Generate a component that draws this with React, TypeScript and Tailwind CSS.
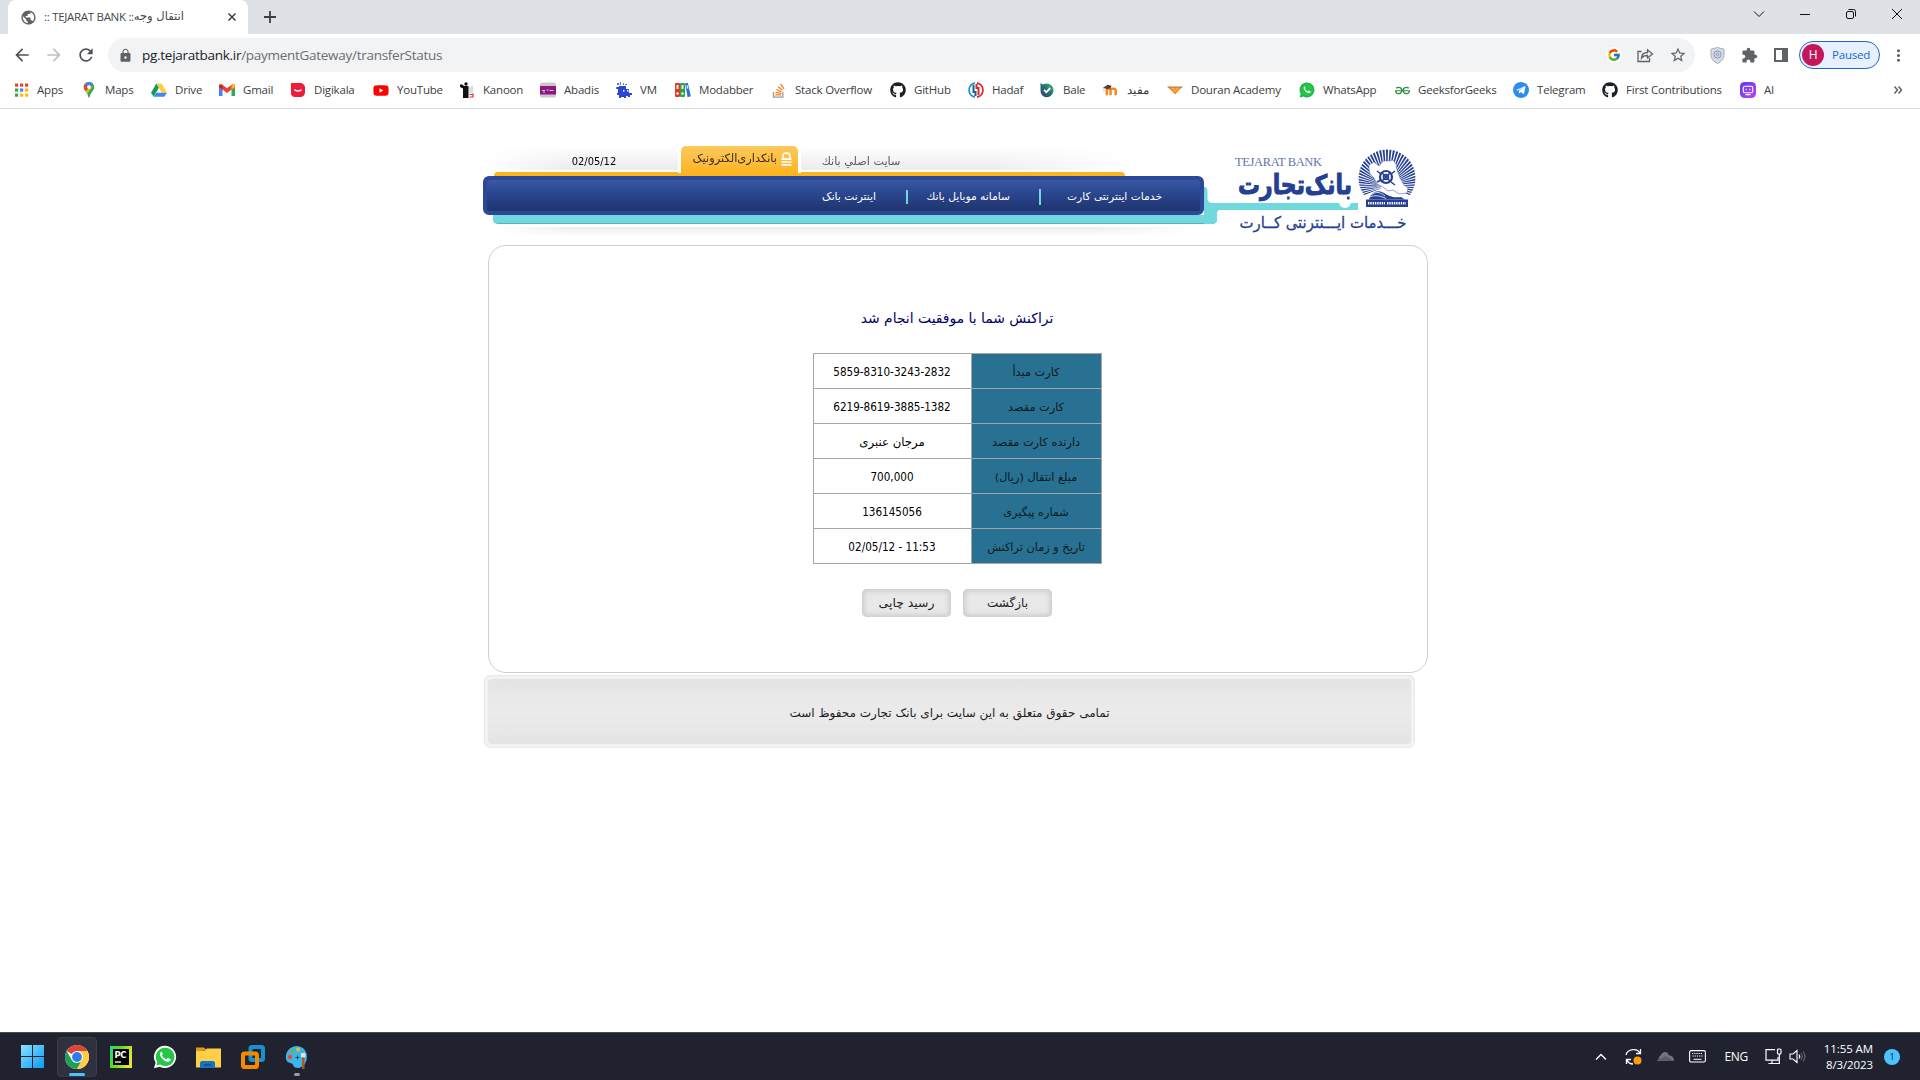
import React from "react";
import { FaGithub, FaYoutube } from "react-icons/fa";
import { FcGoogle } from "react-icons/fc";
import { SiGeeksforgeeks } from "react-icons/si";
import { MdLock, MdExtension, MdStarBorder, MdMoreVert, MdArrowBack, MdArrowForward, MdRefresh, MdPublic } from "react-icons/md";

const AppsIcon = () => (
  <svg width="16" height="16" viewBox="0 0 16 16">
    {["#ea4335", "#ea4335", "#ea4335", "#34a853", "#4285f4", "#fbbc04", "#34a853", "#fbbc04", "#fbbc04"].map((c, i) => (
      <rect key={i} x={2 + (i % 3) * 5} y={1.5 + Math.floor(i / 3) * 5} width="3.2" height="3.2" fill={c} />
    ))}
  </svg>
);
const MapsIcon = () => (
  <svg width="16" height="16" viewBox="0 0 16 16">
    <path d="M8 0C5 0 2.8 2.3 2.8 5.1c0 3.600 3.700 5.400 4.600 10.200.1.6 1.1.6 1.200 0C9.500 10.500 13.200 8.700 13.200 5.100 13.200 2.300 11 0 8 0z" fill="#34a853" />
    <path d="M8 0C5 0 2.800 2.300 2.800 5.100l1.400 3.600L12 1.700A5.200 5.200 0 0 0 8 0z" fill="#4285f4" />
    <path d="M2.800 5.100c0-1.400.5-2.500 1.300-3.400l3.900 3.400-3.500 4C3.600 8 2.800 6.700 2.800 5.100z" fill="#ea4335" />
    <path d="M8 7 4.300 8.900l1.900 2.800L12.600 3z" fill="#fbbc04" />
    <circle cx="8" cy="5.100" r="1.900" fill="#fff" />
  </svg>
);
const DriveIcon = () => (
  <svg width="16" height="16" viewBox="0 0 16 16">
    <path d="M5.400 1.500 0 10.800l2.700 4L8 5.600z" fill="#0f9d58" />
    <path d="M5.400 1.500h5.200l5.400 9.300h-5.300z" fill="#ffcd40" />
    <path d="M5.300 10.800H16l-2.700 4H2.700z" fill="#4285f4" />
  </svg>
);
const GmailIcon = () => (
  <svg width="16" height="16" viewBox="0 0 16 16">
    <path d="M0 3.500V14h3.500V7z" fill="#4285f4" />
    <path d="M16 3.500V14h-3.500V7z" fill="#34a853" />
    <path d="M0 3.500C0 2 1.700 1.500 2.800 2.300L8 6.300l5.200-4C14.300 1.500 16 2 16 3.500V5l-8 6-8-6z" fill="#ea4335" />
    <path d="M12.500 2.900C14 1.500 16 2 16 3.800V5l-3.500 2.600z" fill="#fbbc04" />
    <path d="M0 3.800V5l3.500 2.600V2.900z" fill="#c5221f" />
  </svg>
);
const DigikalaIcon = () => (
  <svg width="16" height="16" viewBox="0 0 16 16">
    <path d="M1 1h9c3 0 5 2 5 5v4c0 3-2 5-5 5H5c-2.500 0-4-1.500-4-4z" fill="#ee1b3b" />
    <path d="M4.500 7.500c1.500 2 5.500 2 7 0" stroke="#fff" strokeWidth="1.600" fill="none" />
  </svg>
);
const KanoonIcon = () => (
  <svg width="16" height="16" viewBox="0 0 16 16">
    <circle cx="7" cy="2" r="1.700" fill="#111" />
    <path d="M1 2.500h2.500l1.500 1.500h4.500V16H4V6.500L1 5z" fill="#111" />
    <path d="M11 5v6M13 4v7" stroke="#bbb" strokeWidth="1" />
    <path d="M10.500 12.500h4M10.500 15h4M14 11.500v4" stroke="#d33" strokeWidth="1.200" />
  </svg>
);
const AbadisIcon = () => (
  <svg width="16" height="16" viewBox="0 0 16 16">
    <rect y="0.500" width="16" height="15" rx="2" fill="#c9c9c9" />
    <rect y="4" width="16" height="8.500" fill="#8d1683" />
    <path d="M2 8.500h3M6.500 8h2M9.500 8.500h4M3 10h2" stroke="#e7bfe4" strokeWidth="1" />
  </svg>
);
const VmIcon = () => (
  <svg width="16" height="16" viewBox="0 0 16 16">
    <path d="M3 4h7v3h3v4h3v2h-2v2h-2v-1h-2v2H8v-1H5v1H3v-3H1v-2h1V7H1V5h2z" fill="#2948cf" />
    <path d="M1 1h2v2H1zM4 0h1v3H4zM7 1h1v2H7zM9 2h2v1H9zM0 5h1v2H0z" fill="#5f78e2" />
    <path d="M7 8h1.500v1.500H7zM11 8h1.500v1.500H11z" fill="#fff" />
  </svg>
);
const ModabberIcon = () => (
  <svg width="16" height="16" viewBox="0 0 16 16">
    <rect x="0" y="1" width="5" height="14" rx="1" fill="#e3342b" />
    <rect x="5" y="1" width="5" height="14" rx="1" fill="#2aa53b" />
    <path d="m10 1.500 2.800-.8 3 13.500-3.200 1z" fill="#2d6fd6" />
    <path d="M1.500 3h2v4h-2zM6.500 3h2v4h-2z" fill="#eef" />
    <circle cx="2.500" cy="11.500" r="1.200" fill="#fff" />
    <circle cx="7.500" cy="11.500" r="1.200" fill="#fff" />
    <path d="m11.300 3.500 1.300-.3.800 3.300-1.300.3z" fill="#eef" />
  </svg>
);
const StackIcon = () => (
  <svg width="16" height="16" viewBox="0 0 16 16">
    <path d="M2.500 10v5.200h9.300V10" stroke="#999" strokeWidth="1.300" fill="none" />
    <path d="M4.300 12.800h5.800M4.500 10.300l5.700 1M5.300 7.500l5.300 2.300M7 4.600l4.500 3.700M9.600 2l3.400 4.800" stroke="#f48024" strokeWidth="1.300" />
  </svg>
);
const HadafIcon = () => (
  <svg width="16" height="16" viewBox="0 0 16 16">
    <path d="M7 1a7.100 7.100 0 0 0 0 14" stroke="#1496d4" strokeWidth="1.800" fill="none" />
    <path d="M9 1a7.100 7.100 0 0 1 0 14" stroke="#d8272d" strokeWidth="1.800" fill="none" />
    <path d="M5.500 3v7h2v4" stroke="#1c5f94" strokeWidth="2" fill="none" />
    <path d="M10.500 13V6h-2V2" stroke="#d8272d" strokeWidth="2" fill="none" />
  </svg>
);
const BaleIcon = () => (
  <svg width="16" height="16" viewBox="0 0 16 16">
    <defs>
      <linearGradient id="bale" x1="0" y1="1" x2="1" y2="0">
        <stop offset="0" stopColor="#2b3f86" />
        <stop offset="0.500" stopColor="#24706f" />
        <stop offset="1" stopColor="#3fc77b" />
      </linearGradient>
    </defs>
    <path d="M1.500 1 4 2.400C9 0 14.500 3.200 14.500 8.300c0 4-3.300 6.900-6.800 6.900-3.700 0-6.200-3.200-6.200-7z" fill="url(#bale)" />
    <path d="m5 7.800 2.300 2.300L11.300 6" stroke="#fff" strokeWidth="1.800" fill="none" />
  </svg>
);
const MoodleIcon = () => (
  <svg width="17" height="16" viewBox="0 0 17 16">
    <path d="M4 13.500V8.500c0-2.600 4-2.600 4 0v5M8 8.500c0-2.600 5.500-2.600 5.500 0v5" stroke="#f98012" strokeWidth="2.500" fill="none" />
    <path d="M0 5.500 5 2.500l4 1-1 2.800-4 .6z" fill="#444" />
    <path d="M1 5.500v4" stroke="#999" strokeWidth="0.700" />
  </svg>
);
const DouranIcon = () => (
  <svg width="18" height="16" viewBox="0 0 18 16">
    <path d="M0 4h18l-2.500 2.500h-13z" fill="#c97f34" />
    <path d="M3 6.500h12L9 13z" fill="#fb8a14" />
    <path d="m6 5 3 5 3-5" stroke="#ffc069" fill="none" />
  </svg>
);
const WhatsIcon = ({ size = 16 }: { size?: number }) => (
  <svg width={size} height={size} viewBox="0 0 24 24">
    <path d="M12 .8A11 11 0 0 0 2.600 17.600L1 23.200l5.800-1.500A11.100 11.100 0 1 0 12 .8z" fill={size > 16 ? "#fff" : "#12b944"} />
    <path d="M12 2.700a9.200 9.200 0 0 0-7.700 14.200l-1 3.700 3.900-1A9.200 9.200 0 1 0 12 2.700z" fill="#25c548" />
    <path d="M8.300 6.700c-.7.300-1.700 1.500-1.200 3.200.8 3 4.200 6.300 7.200 6.900 1.500.3 3-.7 3.200-1.700.2-.7 0-.9-.3-1l-2.300-1.100c-.4-.2-.7 0-1.300 1-.2.3-.5.200-1 0-1.600-.7-3-2-3.700-3.400-.1-.4 1-1 .9-1.700L9 7.200c-.2-.5-.4-.6-.7-.5z" fill="#fff" />
  </svg>
);
const TelegramIcon = () => (
  <svg width="16" height="16" viewBox="0 0 16 16">
    <circle cx="8" cy="8" r="8" fill="#2f8fe8" />
    <path d="m3 8 9.500-4-1.600 8.300-3.200-2.300-1.600 1.500-.3-2.500 4.500-3.700-5.300 3.300z" fill="#fff" />
  </svg>
);
const AiIcon = () => (
  <svg width="16" height="16" viewBox="0 0 16 16">
    <defs>
      <linearGradient id="ai" x1="0" y1="0" x2="1" y2="1">
        <stop offset="0" stopColor="#5a3df0" />
        <stop offset="1" stopColor="#c63df2" />
      </linearGradient>
    </defs>
    <rect width="16" height="16" rx="4.500" fill="url(#ai)" />
    <rect x="3.300" y="4.300" width="9.400" height="6.500" rx="1.700" fill="none" stroke="#fff" strokeWidth="1.100" />
    <path d="M6.200 6.700v1.500M9.800 6.700v1.500M5.500 12.600h5" stroke="#fff" strokeWidth="1.100" />
  </svg>
);

const bookmarks: { label: string; w: string; icon: React.ReactNode }[] = [
  { label: "Apps", w: "w-[68px]", icon: <AppsIcon /> },
  { label: "Maps", w: "w-[70px]", icon: <MapsIcon /> },
  { label: "Drive", w: "w-[68px]", icon: <DriveIcon /> },
  { label: "Gmail", w: "w-[71px]", icon: <GmailIcon /> },
  { label: "Digikala", w: "w-[83px]", icon: <DigikalaIcon /> },
  { label: "YouTube", w: "w-[86px]", icon: <FaYoutube size={17} color="#f00" /> },
  { label: "Kanoon", w: "w-[81px]", icon: <KanoonIcon /> },
  { label: "Abadis", w: "w-[76px]", icon: <AbadisIcon /> },
  { label: "VM", w: "w-[59px]", icon: <VmIcon /> },
  { label: "Modabber", w: "w-[96px]", icon: <ModabberIcon /> },
  { label: "Stack Overflow", w: "w-[119px]", icon: <StackIcon /> },
  { label: "GitHub", w: "w-[78px]", icon: <FaGithub size={16} color="#1b1f23" /> },
  { label: "Hadaf", w: "w-[71px]", icon: <HadafIcon /> },
  { label: "Bale", w: "w-[64px]", icon: <BaleIcon /> },
  { label: "مفید", w: "w-[64px]", icon: <MoodleIcon /> },
  { label: "Douran Academy", w: "w-[132px]", icon: <DouranIcon /> },
  { label: "WhatsApp", w: "w-[95px]", icon: <WhatsIcon /> },
  { label: "GeeksforGeeks", w: "w-[119px]", icon: <SiGeeksforgeeks size={15} color="#2f8d46" /> },
  { label: "Telegram", w: "w-[89px]", icon: <TelegramIcon /> },
  { label: "First Contributions", w: "w-[138px]", icon: <FaGithub size={16} color="#1b1f23" /> },
  { label: "AI", w: "w-[50px]", icon: <AiIcon /> },
];

function Browser() {
  return (
    <div className="font-['Open_Sans',sans-serif]">
      <div className="flex h-[34px] bg-[#dee1e6] pl-2">
        <div className="flex h-[34px] w-[240px] items-center rounded-t-lg bg-white pl-3 pr-[8px] text-[#45484c]">
          <MdPublic size={17} color="#5f6368" />
          <span className="ml-[7px] flex flex-1 items-center whitespace-pre text-[11.5px] tracking-[-0.3px]">
            <span>:: TEJARAT BANK ::</span>
            <span className="font-['DejaVu_Sans',sans-serif] text-[11.5px] tracking-normal">انتقال وجه</span>
          </span>
          <svg width="16" height="16" viewBox="0 0 16 16" stroke="#3c4043" strokeWidth="1.500"><path d="m4.500 4.500 7 7M11.500 4.500l-7 7" /></svg>
        </div>
        <svg className="ml-[14px] mt-[9px]" width="16" height="16" viewBox="0 0 16 16" stroke="#3c4043" strokeWidth="1.800"><path d="M8 2v12M2 8h12" /></svg>
        <div className="ml-auto flex h-7 items-center gap-[30px] pr-[15px]">
          <svg width="16" height="16" viewBox="0 0 16 16" stroke="#111" fill="none"><path d="m3 5.500 5 5 5-5" /></svg>
          <svg width="16" height="16" viewBox="0 0 16 16" stroke="#111" fill="none"><path d="M3 8.500h10" /></svg>
          <svg width="16" height="16" viewBox="0 0 16 16" stroke="#111" fill="none"><rect x="3.500" y="5.500" width="7" height="7" rx="1.500" /><path d="M5.500 3.500h5a2 2 0 0 1 2 2v5" /></svg>
          <svg width="16" height="16" viewBox="0 0 16 16" stroke="#111" fill="none"><path d="m3 3 10 10M13 3 3 13" /></svg>
        </div>
      </div>
      <div className="flex h-[42px] items-center bg-white pl-[12px] pr-[11px]">
        <MdArrowBack size={20} color="#4f5357" />
        <MdArrowForward className="ml-[12px]" size={20} color="#bdc1c6" />
        <MdRefresh className="ml-[12px]" size={20} color="#4f5357" />
        <div className="ml-[12px] flex h-[34px] w-[1587px] items-center rounded-full bg-[#f1f3f4] pl-[10px] pr-[8px]">
          <MdLock size={15} color="#5f6368" />
          <span className="ml-[9px] text-[13.5px] tracking-[-0.28px] text-[#6a6e73]"><span className="text-[#202124]">pg.tejaratbank.ir</span>/paymentGateway/transferStatus</span>
          <div className="ml-auto flex items-center gap-[15px]">
            <span className="flex size-4 items-center justify-center rounded-full bg-white"><FcGoogle size={14} /></span>
            <svg width="17" height="18" viewBox="0 0 17 18" fill="none" stroke="#5f6368" strokeWidth="1.300"><path d="M4.500 5.500H1v10h11.500V12" /><path d="M4.500 12c.3-4 3-5.500 6-5.500V3.800L15.500 8l-5 4V9.500c-3 0-4.500.5-6 2.500z" /></svg>
            <MdStarBorder size={18} color="#5f6368" />
          </div>
        </div>
        <svg className="ml-[15px]" width="15" height="17" viewBox="0 0 15 17"><path d="M7.500.5 14 2.200v6c0 4-3 6.600-6.500 8.200C4 14.800 1 12.200 1 8.200v-6z" fill="#d5dbe6" stroke="#a3adbd" /><circle cx="7.500" cy="7.500" r="3.600" fill="none" stroke="#8b98ae" /><circle cx="7.500" cy="7.500" r="1.400" fill="none" stroke="#8b98ae" /></svg>
        <MdExtension className="ml-[16px]" size={17} color="#5f6368" />
        <svg className="ml-[15px]" width="16" height="16" viewBox="0 0 16 16"><path d="M1 1h14v14H1zm2 2v10h6V3z" fill="#5f6368" fillRule="evenodd" /></svg>
        <div className="ml-[10px] flex h-7 w-[81px] items-center rounded-full border border-[#1967d2] bg-[#e8f0fe] pl-[2px] text-[11.5px] tracking-[-0.2px] text-[#1967d2]">
          <span className="flex size-[22px] items-center justify-center rounded-full bg-[#c2185b] text-[12px] text-white">H</span>
          <span className="ml-[8px]">Paused</span>
        </div>
        <MdMoreVert className="ml-[9px]" size={19} color="#5f6368" />
      </div>
      <div className="flex h-[33px] items-center border-b border-[#d9dadc] bg-white pb-[4px] pl-[13px] pr-[17px] text-[11.5px] tracking-[-0.2px] text-[#3c4043]">
        {bookmarks.map((b, i) => (
          <div key={i} className={b.w + " flex shrink-0 items-center whitespace-nowrap"}>
            <span className="flex w-4 shrink-0 justify-center">{b.icon}</span>
            <span className="ml-2">{b.label}</span>
          </div>
        ))}
        <svg className="ml-auto" width="10" height="10" viewBox="0 0 10 10" stroke="#5f6368" strokeWidth="1.500" fill="none"><path d="m1.500 1.500 3 3.500-3 3.500M5.500 1.500l3 3.500-3 3.500" /></svg>
      </div>
    </div>
  );
}

function Emblem() {
  const rays = Array.from({ length: 41 }, (_, i) => {
    const a = ((-200 + i * 5.5) * Math.PI) / 180;
    const p = (r: number, d: number) => `${(29 + Math.cos(a + d) * r).toFixed(2)} ${(37 + Math.sin(a + d) * r).toFixed(2)}`;
    return `M${p(6, -0.02)}L${p(50, -0.029)}L${p(50, 0.029)}L${p(6, 0.02)}z`;
  }).join("");
  return (
    <g transform="translate(154 5)">
      <clipPath id="disc"><circle cx="29" cy="29" r="28.500" /></clipPath>
      <path d={rays} fill="#253f93" clipPath="url(#disc)" />
      <path d="M11 50.500c2-7 8-10 14-7 5 2.500 9 6 18 4.500l4 2.500z" fill="#253f93" />
      <path d="M11 16l5-3 5 4 4-5h6l4-1 3 4 1 6 3 8 4 7 4 3-1 5-8 1-6-4-5 1-5-4-6-3-3-6-4-4-1-5z" fill="#fff" stroke="#6c7db5" strokeWidth="0.700" />
      <g stroke="#253f93" fill="none">
        <circle cx="28" cy="28" r="6" strokeWidth="2.200" />
        <circle cx="28" cy="28" r="2.400" strokeWidth="1.800" />
        <path d="m24 24 8 8m0-8-8 8M19 22l4 3M33 33l4 3M37 22l-4 3M19 33l4-2" strokeWidth="1.500" />
      </g>
      <path d="M13 46c5-4 9-3 14 1M10 49c6-4 13-2 18 .5" stroke="#fff" strokeWidth="0.800" fill="none" />
      <rect x="8" y="50.500" width="42" height="7.500" fill="#253f93" />
      <path d="M10 54.300h17M29 54.300h19" stroke="#fff" strokeWidth="2.600" strokeDasharray="1.400 0.900" />
    </g>
  );
}

function Header() {
  return (
    <header className="flex h-[100px] w-[940px]">
      <div className="w-[721px]">
        <div className="flex h-[27px] border-b-2 border-white bg-gradient-to-b from-white to-[#ececec] [mask-image:linear-gradient(to_right,transparent,black_12%,black_70%,transparent_90%)] [mask-clip:no-clip]">
          <div className="w-[222px] pt-[9px] text-center font-['DejaVu_Sans_Condensed','DejaVu_Sans',sans-serif] text-[11px] leading-4 text-black">02/05/12</div>
          <div className="relative top-[-2px] ml-[-27px] flex h-[30px] w-[123px] items-center justify-end gap-[4px] rounded-t-[8px] border-[3px] border-b-0 border-white bg-gradient-to-b from-[#fdc95b] to-[#fdb41d] pb-[2px] pr-[6px] text-[#3b2a20]">
            <span dir="rtl" className="whitespace-nowrap font-['DejaVu_Sans',sans-serif] text-[11.400px]">بانکداری‌الکترونیک</span>
            <svg width="11" height="14" viewBox="0 0 11 14" stroke="#fff" fill="none"><path d="M2 6V4a3.500 3 0 0 1 7 0v2" strokeWidth="1.600" /><path d="M.5 7.200h10M.5 10h10M.5 12.800h10" strokeWidth="1.700" /></svg>
          </div>
          <div dir="rtl" className="w-[120px] pt-[9px] text-center font-['DejaVu_Sans',sans-serif] text-[11.200px] leading-4 text-[#5b5b5b]">سایت اصلي بانك</div>
        </div>
        <div className="ml-[11px] h-[4px] w-[631px] rounded-t-[4px] bg-[#fdb41d]" />
        <nav dir="rtl" className="relative z-10 flex h-[39px] w-[721px] items-center rounded-[6px] border-4 border-[#2c4896] bg-gradient-to-b from-[#3b57a6] via-[#29448c] to-[#20356f] pr-[38px] pt-[3px] font-['DejaVu_Sans',sans-serif] text-[10.700px] text-white">
          <span className="w-[95px] whitespace-nowrap">خدمات اینترنتی كارت</span>
          <span className="mr-[26px] h-[16px] w-[2px] bg-[#6fd9de]" />
          <span className="mr-[29px] w-[84px] whitespace-nowrap">سامانه موبایل بانك</span>
          <span className="mr-[18px] h-[14px] w-[2px] bg-[#6fd9de]" />
          <span className="mr-[30px] w-[55px] whitespace-nowrap">اینترنت بانک</span>
        </nav>
        <div className="ml-[10px] h-[9px] w-[724px] rounded-b-[5px] border-b border-[#4fb9bf] bg-[#6fd9de]" />
        <div className="ml-[15px] mt-[3px] h-[9px] w-[700px] bg-gradient-to-b from-[#ebebeb] to-white [mask-image:linear-gradient(to_right,transparent,black_10%,black_85%,transparent)]" />
      </div>
      <svg className="mt-[-1px]" width="219" height="100" viewBox="0 0 219 100">
        <path d="M0 43c3 0 3.500 2 3.500 5v6c0 4 2 5 6 5H154v7H17c-4 0-4 2-4 5v4c0 4-2 5-5 5H0z" fill="#6fd9de" />
        <text x="31" y="22" fontFamily="Liberation Serif" fontSize="12.500" textLength="87" fill="#6474ac">TEJARAT BANK</text>
        <circle cx="141" cy="58" r="6" fill="#fff" />
        <text x="91" y="50" textAnchor="middle" direction="rtl" fontFamily="DejaVu Sans" fontWeight="bold" fontSize="27" textLength="114" lengthAdjust="spacingAndGlyphs" fill="#253f93" stroke="#253f93" strokeWidth="1">بانک‌تجارت</text>
        <text x="119" y="83.500" textAnchor="middle" direction="rtl" fontFamily="DejaVu Sans" fontSize="16" textLength="167" lengthAdjust="spacingAndGlyphs" fill="#253f93" stroke="#253f93" strokeWidth="0.300">خـــدمات ایـــنترنتی کــارت</text>
        <Emblem />
      </svg>
    </header>
  );
}

const rows = [
  ["کارت مبدأ", "5859-8310-3243-2832"],
  ["کارت مقصد", "6219-8619-3885-1382"],
  ["دارنده کارت مقصد", "مرجان عنبری"],
  ["مبلغ انتقال (ریال)", "700,000"],
  ["شماره پیگیری", "136145056"],
  ["تاریخ و زمان تراکنش", "02/05/12 - 11:53"],
];

function Page() {
  return (
    <main className="h-[923px] bg-white pl-[483px] pt-[36px] font-['DejaVu_Sans',sans-serif]">
      <Header />
      <section className="ml-[5px] flex h-[428px] w-[940px] flex-col items-center rounded-[18px] border border-[#cfcfcf] pr-[2px]">
        <h1 dir="rtl" className="mt-[62px] text-[13.900px] leading-5 text-[#000066]">تراکنش شما با موفقیت انجام شد</h1>
        <div dir="rtl" className="mt-[25px] w-[289px] border-x border-t border-[#a6a6a6]">
          {rows.map(([k, v], i) => (
            <div key={k} className="flex h-[35px] border-b border-[#a6a6a6]">
              <div className="flex w-[130px] items-center justify-center border-l border-[#a6a6a6] bg-[#287192] pt-[4px] text-[11.300px] text-[#0c1a22]">{k}</div>
              {i === 2 ? (
                <div className="flex flex-1 items-center justify-center pt-[4px] text-[11.700px] text-black">{v}</div>
              ) : (
                <div className="flex flex-1 items-center justify-center pt-[4px] font-['DejaVu_Sans_Condensed','DejaVu_Sans',sans-serif] text-[11.600px] text-black"><bdi dir="ltr">{v}</bdi></div>
              )}
            </div>
          ))}
        </div>
        <div dir="rtl" className="mt-[25px] flex gap-3">
          <button className="h-7 w-[89px] rounded-[5px] bg-[#e8e8e8] text-[12px] text-[#222] shadow-[inset_0_0_5px_2px_#cacaca]">بازگشت</button>
          <button className="h-7 w-[89px] rounded-[5px] bg-[#e8e8e8] text-[12.400px] text-[#222] shadow-[inset_0_0_5px_2px_#cacaca]">رسید چاپی</button>
        </div>
      </section>
      <footer className="ml-[1px] mt-[2px] h-[73px] w-[931px] rounded-[6px] border border-[#e9e9e9] bg-[#f2f2f2] p-[3px]">
        <div dir="rtl" className="flex h-full items-center justify-center rounded-[4px] bg-gradient-to-b from-[#e4e4e4] via-[#ebebeb] to-[#e4e4e4] pt-[3px] text-[12px] text-[#1c1c1c]">تمامی حقوق متعلق به این سایت برای بانک تجارت محفوظ است</div>
      </footer>
    </main>
  );
}

function Taskbar() {
  return (
    <div className="flex h-[48px] items-center border-t border-[#474854] bg-[#20222f] pl-[21px] pr-[20px] font-['Open_Sans',sans-serif] text-white">
      <svg width="23" height="23" viewBox="0 0 23 23">
        <defs><linearGradient id="win" x1="0" y1="0" x2="1" y2="1"><stop offset="0" stopColor="#8fe0ff" /><stop offset="1" stopColor="#0a9bf5" /></linearGradient></defs>
        <path d="M0 0h11v11H0zM12 0h11v11H12zM0 12h11v11H0zM12 12h11v11H12z" fill="url(#win)" />
      </svg>
      <div className="ml-[13px] flex h-10 w-10 flex-col items-center rounded-[4px] border border-[#393b47] bg-[#2f313e] pt-[7px]">
        <svg width="24" height="24" viewBox="0 0 24 24">
          <circle cx="12" cy="12" r="12" fill="#fff" />
          <path d="M12 12 1.600 6A12 12 0 0 1 22.400 6H12z" fill="#dc4437" />
          <path d="M1.600 6A12 12 0 0 0 12 24l5.200-9L12 12 6.800 15z" fill="#1fa055" />
          <path d="M22.400 6A12 12 0 0 1 12 24l5.200-9L12 6z" fill="#ffcd40" />
          <circle cx="12" cy="12" r="6" fill="#fff" /><circle cx="12" cy="12" r="4.900" fill="#2f7de9" />
        </svg>
        <span className="mt-[4px] h-[3px] w-4 shrink-0 rounded-full bg-[#4cc2ff]" />
      </div>
      <svg className="ml-[13px]" width="22" height="22" viewBox="0 0 22 22">
        <defs><linearGradient id="pc" x1="0" y1="0" x2="1" y2="0.400"><stop offset="0" stopColor="#21d789" /><stop offset="0.400" stopColor="#57d920" /><stop offset="1" stopColor="#e5e82a" /></linearGradient></defs>
        <rect width="22" height="22" fill="url(#pc)" /><rect x="3" y="3" width="16" height="16" fill="#000" />
        <text x="4.500" y="11.500" fontFamily="DejaVu Sans" fontWeight="bold" fontSize="8.500" fill="#fff" textLength="12">PC</text><path d="M5 16h6" stroke="#fff" strokeWidth="1.300" />
      </svg>
      <div className="ml-[21px]"><WhatsIcon size={24} /></div>
      <svg className="ml-[19px]" width="25" height="22" viewBox="0 0 25 22">
        <path d="M0 1.500h8l3 3H8L0 7z" fill="#e09a1b" /><path d="M0 5h8l3-2.500h14V21.500H0z" fill="#ffcf48" />
        <path d="M4 22v-5c0-1 1-2 2-2h11c1 0 2 1 2 2v5z" fill="#1273c8" /><path d="M8 19h7" stroke="#094b8c" strokeWidth="1.500" />
      </svg>
      <svg className="ml-[20px]" width="24" height="24" viewBox="0 0 24 24" fill="none" strokeWidth="4">
        <rect x="9.500" y="2" width="12.500" height="13" rx="1.500" stroke="#1492d3" /><path d="M8 8.500H3.500A1.500 1.500 0 0 0 2 10v10.500A1.500 1.500 0 0 0 3.500 22h11a1.500 1.500 0 0 0 1.500-1.500V10.500A2 2 0 0 0 14 8.500H8" stroke="#f38b00" />
      </svg>
      <div className="ml-[20px] flex flex-col items-center pt-[7px]">
        <svg width="24" height="24" viewBox="0 0 24 24">
          <path d="M12 1C5 1 0 7 1 14c1 5 6 3 7 6s6 5 11 0c5-6 4-18-7-19z" fill="#3fb4ea" />
          <circle cx="5" cy="12" r="2.200" fill="#e8492b" /><circle cx="7.500" cy="6.500" r="2" fill="#6ab82d" /><circle cx="13" cy="4.500" r="2" fill="#f3b72a" />
          <path d="M12.500 10.500v4M10.500 12.500h4" stroke="#1d4b7a" /><rect x="16" y="8" width="4.500" height="4.500" rx="1" fill="#eee0c5" /><path d="M17 12.500h2.500V24H17z" fill="#a75c1c" />
        </svg>
        <span className="mt-[4px] h-[3px] w-[6px] rounded-full bg-[#9a9ba3]" />
      </div>
      <div className="ml-auto flex items-center">
        <svg width="12" height="8" viewBox="0 0 12 8" fill="none" stroke="#fff" strokeWidth="1.400"><path d="m1 6.500 5-5 5 5" /></svg>
        <svg className="ml-[18px]" width="18" height="18" viewBox="0 0 18 18" fill="none" stroke="#fff" strokeWidth="1.300"><path d="M1 7c1.500-6 11-7.500 14-2M15.500 1v4.500H11M8 16c-3 0-5-1.500-6-4M1.500 16v-4.500H6" /><circle cx="12.500" cy="12.500" r="4" fill="#ff9a0a" stroke="none" /></svg>
        <svg className="ml-[14px]" width="17" height="10" viewBox="0 0 17 10"><path d="M3 9a3 3 0 0 1 0-5c1 0 1-3 4.500-4 3-.3 4 2 4.500 3.500 3 0 5 2 5 5.500z" fill="#73757e" /><path d="M0 8 9 4l8 5H0z" fill="#5b5d67" /></svg>
        <svg className="ml-[15px]" width="17" height="13" viewBox="0 0 17 13" fill="none" stroke="#fff"><rect x="0.600" y="0.600" width="15.800" height="11.400" rx="1.500" strokeWidth="1.100" /><path d="M3 3.500h11M3.500 6h10" strokeDasharray="1.200 1" /><path d="M4.500 9.300h8" /></svg>
        <span className="ml-[18px] text-[12px] tracking-[-0.3px]">ENG</span>
        <svg className="ml-[17px]" width="17" height="17" viewBox="0 0 17 17" fill="none" stroke="#fff" strokeWidth="1.200"><path d="M10 1.600H1v10.500h12V9M7 12v3.500M3.500 15.500h7" /><rect x="12.500" y="1" width="3.500" height="5" rx="1" /><path d="M14.300 6v9.500H10" /></svg>
        <svg className="ml-[7px]" width="17" height="15" viewBox="0 0 17 15" fill="none" stroke="#fff" strokeWidth="1.100"><path d="M1 5h3l4-3.500v12L4 10H1zM10 5.500q1.500 2 0 4" /><path d="M12 4q2.500 3.500 0 7M14 2.500q4 5 0 10" stroke="#666875" /></svg>
        <div className="ml-[15px] flex w-[52px] flex-col items-end whitespace-nowrap text-[11.500px] leading-4 tracking-[-0.1px]"><div>11:55 AM</div><div>8/3/2023</div></div>
        <span className="ml-[11px] flex size-4 items-center justify-center rounded-full bg-[#4cc2ff] text-[9px] text-[#10222e]">1</span>
      </div>
    </div>
  );
}

export default function App() {
  return (
    <div className="h-[1080px] w-[1920px] overflow-hidden bg-white">
      <Browser />
      <Page />
      <Taskbar />
    </div>
  );
}
